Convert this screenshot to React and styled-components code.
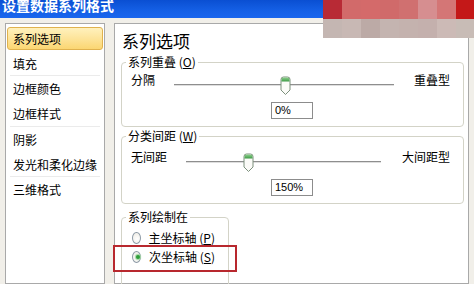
import styled, { createGlobalStyle } from "styled-components";

const GlobalStyle = createGlobalStyle`
  html, body {
    margin: 0;
    padding: 0;
  }
  body {
    width: 474px;
    height: 284px;
    overflow: hidden;
    background: #f1efe9;
    font-family: "Noto Sans CJK SC", "Noto Sans", sans-serif;
    color: #000;
  }
`;

const navItems = [
  { label: "系列选项", selected: true },
  { label: "填充", divider: true },
  { label: "边框颜色" },
  { label: "边框样式", divider: true },
  { label: "阴影" },
  { label: "发光和柔化边缘", divider: true },
  { label: "三维格式" },
];

const mosaic = [
  ["#b82a35", "#d26a6a", "#d46a6a", "#d06a6a", "#d07070", "#d68e90", "#d47676", "#c41818"],
  ["#c4b6b2", "#c8b8b4", "#bcaaa6", "#c4b4b0", "#c4b2ae", "#c4b0ad", "#ccbab6", "#c8bcb6"],
];

function Thumb() {
  return (
    <svg width="11" height="20" viewBox="0 0 11 20">
      <defs>
        <linearGradient id="tg" x1="0" y1="0" x2="0" y2="1">
          <stop offset="0" stopColor="#8fd18f" />
          <stop offset="1" stopColor="#3d9a45" />
        </linearGradient>
      </defs>
      <path d="M1 3.5 Q1 1 3.5 1 H7.5 Q10 1 10 3.5 V14 L5.5 18.5 L1 14 Z" fill="#fbfbf8" stroke="#7c907c" />
      <path d="M1.5 3.5 Q1.5 1.5 3.5 1.5 H7.5 Q9.5 1.5 9.5 3.5 V5.5 H1.5 Z" fill="url(#tg)" />
    </svg>
  );
}

function Slider({ value, labelWidth, gap, left, right, rowTop }) {
  return (
    <SliderRow $labelWidth={labelWidth} $top={rowTop}>
      <span>{left}</span>
      <Track>
        <ThumbWrap style={{ left: `calc(${value}% - ${value * 0.11}px)` }}>
          <Thumb />
        </ThumbWrap>
      </Track>
      <EndLabel $gap={gap}>{right}</EndLabel>
    </SliderRow>
  );
}

export default function App() {
  return (
    <>
      <GlobalStyle />
      <Window>
        <TitleBar>
          <TitleText>设置数据系列格式</TitleText>
        </TitleBar>
        <Body>
          <NavPanel>
            {navItems.map((item) => (
              <NavItem key={item.label} $selected={item.selected} $divider={item.divider}>
                {item.label}
              </NavItem>
            ))}
          </NavPanel>
          <ContentPanel>
            <Heading>系列选项</Heading>
            <Group $top={4}>
              <Legend>
                系列重叠 (<u>O</u>)
              </Legend>
              <Slider value={50} labelWidth={43} gap={20} left="分隔" right="重叠型" rowTop={1} />
              <ValueBox>0%</ValueBox>
            </Group>
            <Group $top={2}>
              <Legend>
                分类间距 (<u>W</u>)
              </Legend>
              <Slider value={30} labelWidth={55} gap={21} left="无间距" right="大间距型" rowTop={4} />
              <ValueBox>150%</ValueBox>
            </Group>
            <Group $top={6} $width={108} $bottom={24}>
              <Legend>系列绘制在</Legend>
              <RadioList>
                <RadioRow>
                  <Radio />
                  <span>
                    主坐标轴 (<u>P</u>)
                  </span>
                </RadioRow>
                <RadioRow>
                  <Radio $checked />
                  <span>
                    次坐标轴 (<u>S</u>)
                  </span>
                  <Highlight />
                </RadioRow>
              </RadioList>
            </Group>
          </ContentPanel>
        </Body>
        <Mosaic>
          {mosaic.flat().map((c, i) => (
            <Tile key={i} $color={c} />
          ))}
        </Mosaic>
      </Window>
    </>
  );
}

const Window = styled.div`
  position: relative;
  width: 474px;
  height: 284px;
  overflow: hidden;
  display: flex;
  flex-direction: column;
`;

const TitleBar = styled.div`
  height: 18px;
  flex-shrink: 0;
  overflow: hidden;
  background: linear-gradient(180deg, #0a4fd2 0%, #1560e6 60%, #1a66ee 100%);
`;

const TitleText = styled.div`
  margin: -2px 0 0 2px;
  color: #fff;
  font-size: 14px;
  font-weight: 700;
  line-height: 14px;
  white-space: nowrap;
`;

const Body = styled.div`
  flex: 1;
  min-height: 0;
  display: flex;
  gap: 9px;
  padding: 5px 5px 0 5px;
`;

const NavPanel = styled.div`
  width: 100px;
  flex-shrink: 0;
  box-sizing: border-box;
  background: #fff;
  border: 1px solid #a9a9a9;
  padding-top: 2px;
`;

const NavItem = styled.div`
  position: relative;
  box-sizing: border-box;
  height: ${(p) => (p.$selected ? "23px" : "25.3px")};
  margin: ${(p) => (p.$selected ? "1px 1px 1px" : "0")};
  padding-left: ${(p) => (p.$selected ? "5px" : "7px")};
  display: flex;
  align-items: center;
  font-size: 12px;
  line-height: 14px;
  white-space: nowrap;
  border: ${(p) => (p.$selected ? "1px solid #e0b24e" : "none")};
  border-radius: 3px;
  background: ${(p) =>
    p.$selected ? "linear-gradient(180deg, #fff1bd 0%, #fde49a 50%, #fbd672 100%)" : "transparent"};

  &::after {
    content: "";
    display: ${(p) => (p.$divider ? "block" : "none")};
    position: absolute;
    left: 4px;
    right: 4px;
    bottom: 0;
    height: 1px;
    background: #ebebeb;
  }
`;

const ContentPanel = styled.div`
  flex: 1;
  min-width: 0;
  box-sizing: border-box;
  background: #fff;
  border: 1px solid #a9a9a9;
  padding: 0 4px 0 6px;
`;

const Heading = styled.div`
  margin-top: 7px;
  padding-left: 1px;
  font-size: 17px;
  line-height: 20px;
  height: 20px;
`;

const Group = styled.fieldset`
  box-sizing: border-box;
  margin: ${(p) => p.$top}px 0 0;
  padding: 0 13px ${(p) => p.$bottom ?? 7}px 9px;
  width: ${(p) => (p.$width ? `${p.$width}px` : "auto")};
  min-width: 0;
  border: 1px solid #d3d3c7;
  border-radius: 4px;
`;

const Legend = styled.legend`
  margin-left: -5px;
  padding: 0 2px;
  font-size: 12px;
  line-height: 14px;
  white-space: nowrap;

  u {
    text-decoration-thickness: 1px;
    text-underline-offset: 1px;
  }
`;

const SliderRow = styled.div`
  display: grid;
  grid-template-columns: ${(p) => p.$labelWidth}px 1fr auto;
  align-items: center;
  height: 20px;
  margin-top: ${(p) => p.$top}px;
  font-size: 12px;
  line-height: 14px;
  white-space: nowrap;
`;

const EndLabel = styled.span`
  padding-left: ${(p) => p.$gap}px;
`;

const Track = styled.div`
  position: relative;
  align-self: stretch;

  &::before {
    content: "";
    position: absolute;
    left: 0;
    right: 0;
    top: 14px;
    height: 1px;
    background: #8e8e8e;
    border-bottom: 1px solid #dedede;
  }
`;

const ThumbWrap = styled.div`
  position: absolute;
  top: 6px;
  margin-left: 2px;
  width: 11px;
  height: 20px;
  line-height: 0;
`;

const ValueBox = styled.div`
  box-sizing: border-box;
  margin: 12px 0 0 140px;
  width: 42px;
  height: 17px;
  border: 1px solid #8c8c8c;
  padding-left: 3px;
  font-family: "Liberation Sans", Arial, sans-serif;
  font-size: 11px;
  line-height: 15px;
`;

const RadioList = styled.div`
  display: flex;
  flex-direction: column;
  gap: 1px;
  margin-top: 5px;
`;

const RadioRow = styled.div`
  position: relative;
  display: flex;
  align-items: center;
  gap: 8px;
  height: 18px;
  padding-left: 1px;
  font-size: 12px;
  line-height: 14px;
  white-space: nowrap;
`;

const Radio = styled.span`
  position: relative;
  box-sizing: border-box;
  width: 12px;
  height: 12px;
  border-radius: 50%;
  border: 1px solid #8d9aa6;
  background: radial-gradient(circle at 60% 60%, #ffffff 0%, #eceae2 100%);

  &::after {
    content: "";
    display: ${(p) => (p.$checked ? "block" : "none")};
    position: absolute;
    left: 3px;
    top: 3px;
    width: 4px;
    height: 4px;
    border-radius: 50%;
    background: #2f9e3a;
    box-shadow: 0 0 1px 1px #9fd6a0;
  }
`;

const Highlight = styled.div`
  position: absolute;
  left: -18px;
  top: -3px;
  width: 124px;
  height: 27px;
  box-sizing: border-box;
  border: 2px solid #b8282e;
  pointer-events: none;
`;

const Mosaic = styled.div`
  position: absolute;
  top: 0;
  right: 0;
  width: 151px;
  height: 38px;
  display: grid;
  grid-template-columns: repeat(7, 19px) 18px;
  grid-template-rows: 19px 19px;
`;

const Tile = styled.div`
  background: ${(p) => p.$color};
`;
